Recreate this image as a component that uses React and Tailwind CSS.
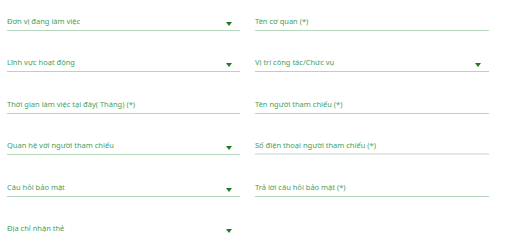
import React from 'react';

const fields = [
    { label: 'Đơn vị đang làm việc', select: true },
    { label: 'Tên cơ quan (*)' },
    { label: 'Lĩnh vực hoạt động', select: true },
    { label: 'Vị trí công tác/Chức vụ', select: true },
    { label: 'Thời gian làm việc tại đây( Tháng) (*)' },
    { label: 'Tên người tham chiếu (*)' },
    { label: 'Quan hệ với người tham chiếu', select: true },
    { label: 'Số điện thoại người tham chiếu (*)', muted: true },
    { label: 'Câu hỏi bảo mật', select: true },
    { label: 'Trả lời câu hỏi bảo mật (*)' },
    { label: 'Địa chỉ nhận thẻ', select: true },
];

const Caret = () => (
    <svg width="6" height="4" viewBox="0 0 6 4" className="absolute right-[8px] bottom-[4px]">
        <path d="M0 0h6L3 4z" fill="#1f7a24" />
    </svg>
);

const Field = ({ label, select, muted }) => (
    <div
        className={`relative h-[15px] pb-[4px] ${muted ? 'border-b-2 border-[#e3e8e4]' : 'border-b border-[#b7d4bd]'}`}
    >
        <div className="text-[7.5px] leading-[10px] text-[#43a05e] whitespace-nowrap">{label}</div>
        {select && <Caret />}
    </div>
);

export default function App() {
    return (
        <div className="w-[512px] h-[237px] overflow-hidden bg-white" style={{ fontFamily: '"Noto Sans", sans-serif' }}>
            <div className="grid grid-cols-[233px_234px] gap-x-[15px] gap-y-[26.4px] pl-[7px] pt-[16px] items-start">
                {fields.map((f, i) => (
                    <Field key={i} {...f} />
                ))}
            </div>
        </div>
    );
}
